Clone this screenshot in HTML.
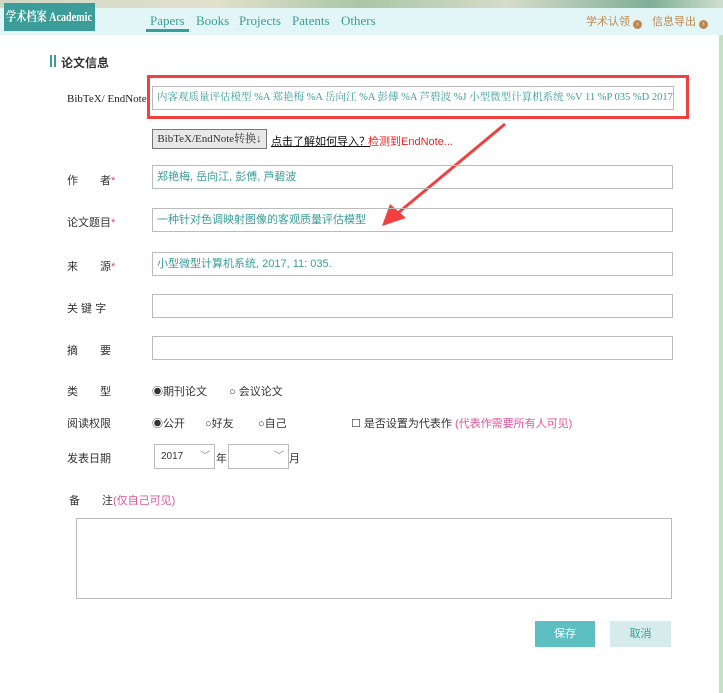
<!DOCTYPE html>
<html><head><meta charset="utf-8"><style>
body{margin:0;width:723px;height:693px;position:relative;overflow:hidden;background:#fff;font-family:"Liberation Sans","Noto Sans CJK SC",sans-serif;font-size:12px;color:#333}
.a{position:absolute}
.top{left:0;top:0;width:723px;height:8px;background:linear-gradient(90deg,#cfd8c4,#e3e0cc 30%,#a9c6a6 50%,#d6dcc8 70%,#7fae96 90%,#cfe0cc)}
.hdr{left:0;top:8px;width:723px;height:27px;background:#e3f6f7}
.logo{left:4px;top:3px;width:91px;height:28px;background:#3a9d9a;overflow:hidden}
.logo span{position:absolute;left:45px;top:0;transform:translateX(-50%) scaleX(0.78);color:#fff;font-family:"Liberation Serif","Noto Serif CJK SC",serif;font-weight:bold;font-size:13px;line-height:28px;white-space:nowrap}
.nav{top:13px;font-family:"Liberation Serif","Noto Serif CJK SC",serif;font-size:13px;color:#3a9d9a}
.rt{top:13px;color:#c08850;font-size:11px}
.dot{display:inline-block;width:9px;height:9px;border-radius:50%;background:#c08850;color:#fff;font-size:7px;line-height:9px;text-align:center;vertical-align:-1px;margin-left:3px}
.inp{position:absolute;height:24px;border:1px solid #bbb;box-sizing:border-box;color:#3a9d9a;font-size:11px;line-height:22px;padding-left:4px;white-space:nowrap;overflow:hidden}
.lbl{position:absolute;font-size:11px;color:#333}
.star{color:#e0457b}
.pink{color:#e0559b}
.side{left:719px;top:35px;width:4px;height:658px;background:#c4dfc8}
</style></head><body>
<div class="a top"></div>
<div class="a hdr"></div>
<div class="a logo"><span>学术档案 Academic</span></div>
<div class="a nav" style="left:150px">Papers</div>
<div class="a" style="left:146px;top:29px;width:43px;height:3px;background:#3a9d9a"></div>
<div class="a nav" style="left:196px">Books</div>
<div class="a nav" style="left:239px">Projects</div>
<div class="a nav" style="left:292px">Patents</div>
<div class="a nav" style="left:341px">Others</div>
<div class="a rt" style="left:586px">学术认领<span class="dot">›</span></div>
<div class="a rt" style="left:652px">信息导出<span class="dot">›</span></div>
<div class="a side"></div>

<div class="a" style="left:50px;top:55px;width:2px;height:12px;background:#3a9d9a"></div>
<div class="a" style="left:54px;top:55px;width:2px;height:12px;background:#3a9d9a"></div>
<div class="a" style="left:61px;top:54px;font-size:12px;font-weight:bold;color:#333">论文信息</div>

<div class="a" style="left:147px;top:75px;width:542px;height:44px;border:3px solid #f04040;box-sizing:border-box"></div>
<div class="lbl" style="left:67px;top:93px;font-family:'Liberation Serif',serif;color:#222">BibTeX/ EndNote</div>
<div class="inp" style="left:152px;top:86px;width:522px;background:#fff;font-size:10.5px;font-family:'Liberation Serif','Noto Serif CJK SC',serif">内客观质量评估模型 %A 郑艳梅 %A 岳向江 %A 彭傅 %A 芦碧波 %J 小型微型计算机系统 %V 11 %P 035 %D 2017</div>

<div class="a" style="left:152px;top:129px;width:115px;height:20px;background:#e8e8e8;border:1px solid #777;box-sizing:border-box;font-family:'Liberation Serif','Noto Serif CJK SC',serif;font-size:11px;line-height:18px;text-align:center;white-space:nowrap">BibTeX/EndNote转换↓</div>
<div class="a" style="left:271px;top:133px;font-size:11px;text-decoration:underline;color:#111">点击了解如何导入？</div>
<div class="a" style="left:368px;top:133px;font-size:11px;color:#f02020">检测到EndNote...</div>

<svg class="a" style="left:380px;top:120px" width="130" height="110"><line x1="125" y1="4" x2="12" y2="98" stroke="#f04040" stroke-width="3"/><polygon points="2,106 10,84 26,98" fill="#f04040"/></svg>

<div class="lbl" style="left:67px;top:172px">作　　者<span class="star">*</span></div>
<div class="inp" style="left:152px;top:165px;width:521px">郑艳梅, 岳向江, 彭傅, 芦碧波</div>
<div class="lbl" style="left:67px;top:214px">论文题目<span class="star">*</span></div>
<div class="inp" style="left:152px;top:208px;width:521px">一种针对色调映射图像的客观质量评估模型</div>
<div class="lbl" style="left:67px;top:258px">来　　源<span class="star">*</span></div>
<div class="inp" style="left:152px;top:252px;width:521px">小型微型计算机系统, 2017, 11: 035.</div>
<div class="lbl" style="left:67px;top:300px">关 键 字</div>
<div class="inp" style="left:152px;top:294px;width:521px"></div>
<div class="lbl" style="left:67px;top:342px">摘　　要</div>
<div class="inp" style="left:152px;top:336px;width:521px"></div>

<div class="lbl" style="left:67px;top:383px">类　　型</div>
<div class="lbl" style="left:152px;top:383px">◉期刊论文</div>
<div class="lbl" style="left:229px;top:383px">○ 会议论文</div>
<div class="lbl" style="left:67px;top:415px">阅读权限</div>
<div class="lbl" style="left:152px;top:415px">◉公开</div>
<div class="lbl" style="left:205px;top:415px">○好友</div>
<div class="lbl" style="left:258px;top:415px">○自己</div>
<div class="lbl" style="left:351px;top:415px">☐ 是否设置为代表作 <span class="pink">(代表作需要所有人可见)</span></div>
<div class="lbl" style="left:67px;top:450px">发表日期</div>
<div class="a" style="left:154px;top:444px;width:61px;height:25px;border:1px solid #bbb;box-sizing:border-box;font-size:10px;line-height:23px;padding-left:6px">2017<span style="position:absolute;right:4px;color:#888">﹀</span></div>
<div class="lbl" style="left:216px;top:450px">年</div>
<div class="a" style="left:228px;top:444px;width:61px;height:25px;border:1px solid #bbb;box-sizing:border-box;font-size:10px;line-height:23px"><span style="position:absolute;right:4px;color:#888">﹀</span></div>
<div class="lbl" style="left:289px;top:450px">月</div>
<div class="lbl" style="left:69px;top:492px">备　　注<span class="pink">(仅自己可见)</span></div>
<div class="a" style="left:76px;top:518px;width:596px;height:81px;border:1px solid #bbb;box-sizing:border-box"></div>

<div class="a" style="left:535px;top:621px;width:60px;height:26px;background:#5dbfc1;color:#fff;font-size:11px;line-height:26px;text-align:center">保存</div>
<div class="a" style="left:610px;top:621px;width:61px;height:26px;background:#d5ebec;color:#3a9d9a;font-size:11px;line-height:26px;text-align:center">取消</div>
</body></html>
